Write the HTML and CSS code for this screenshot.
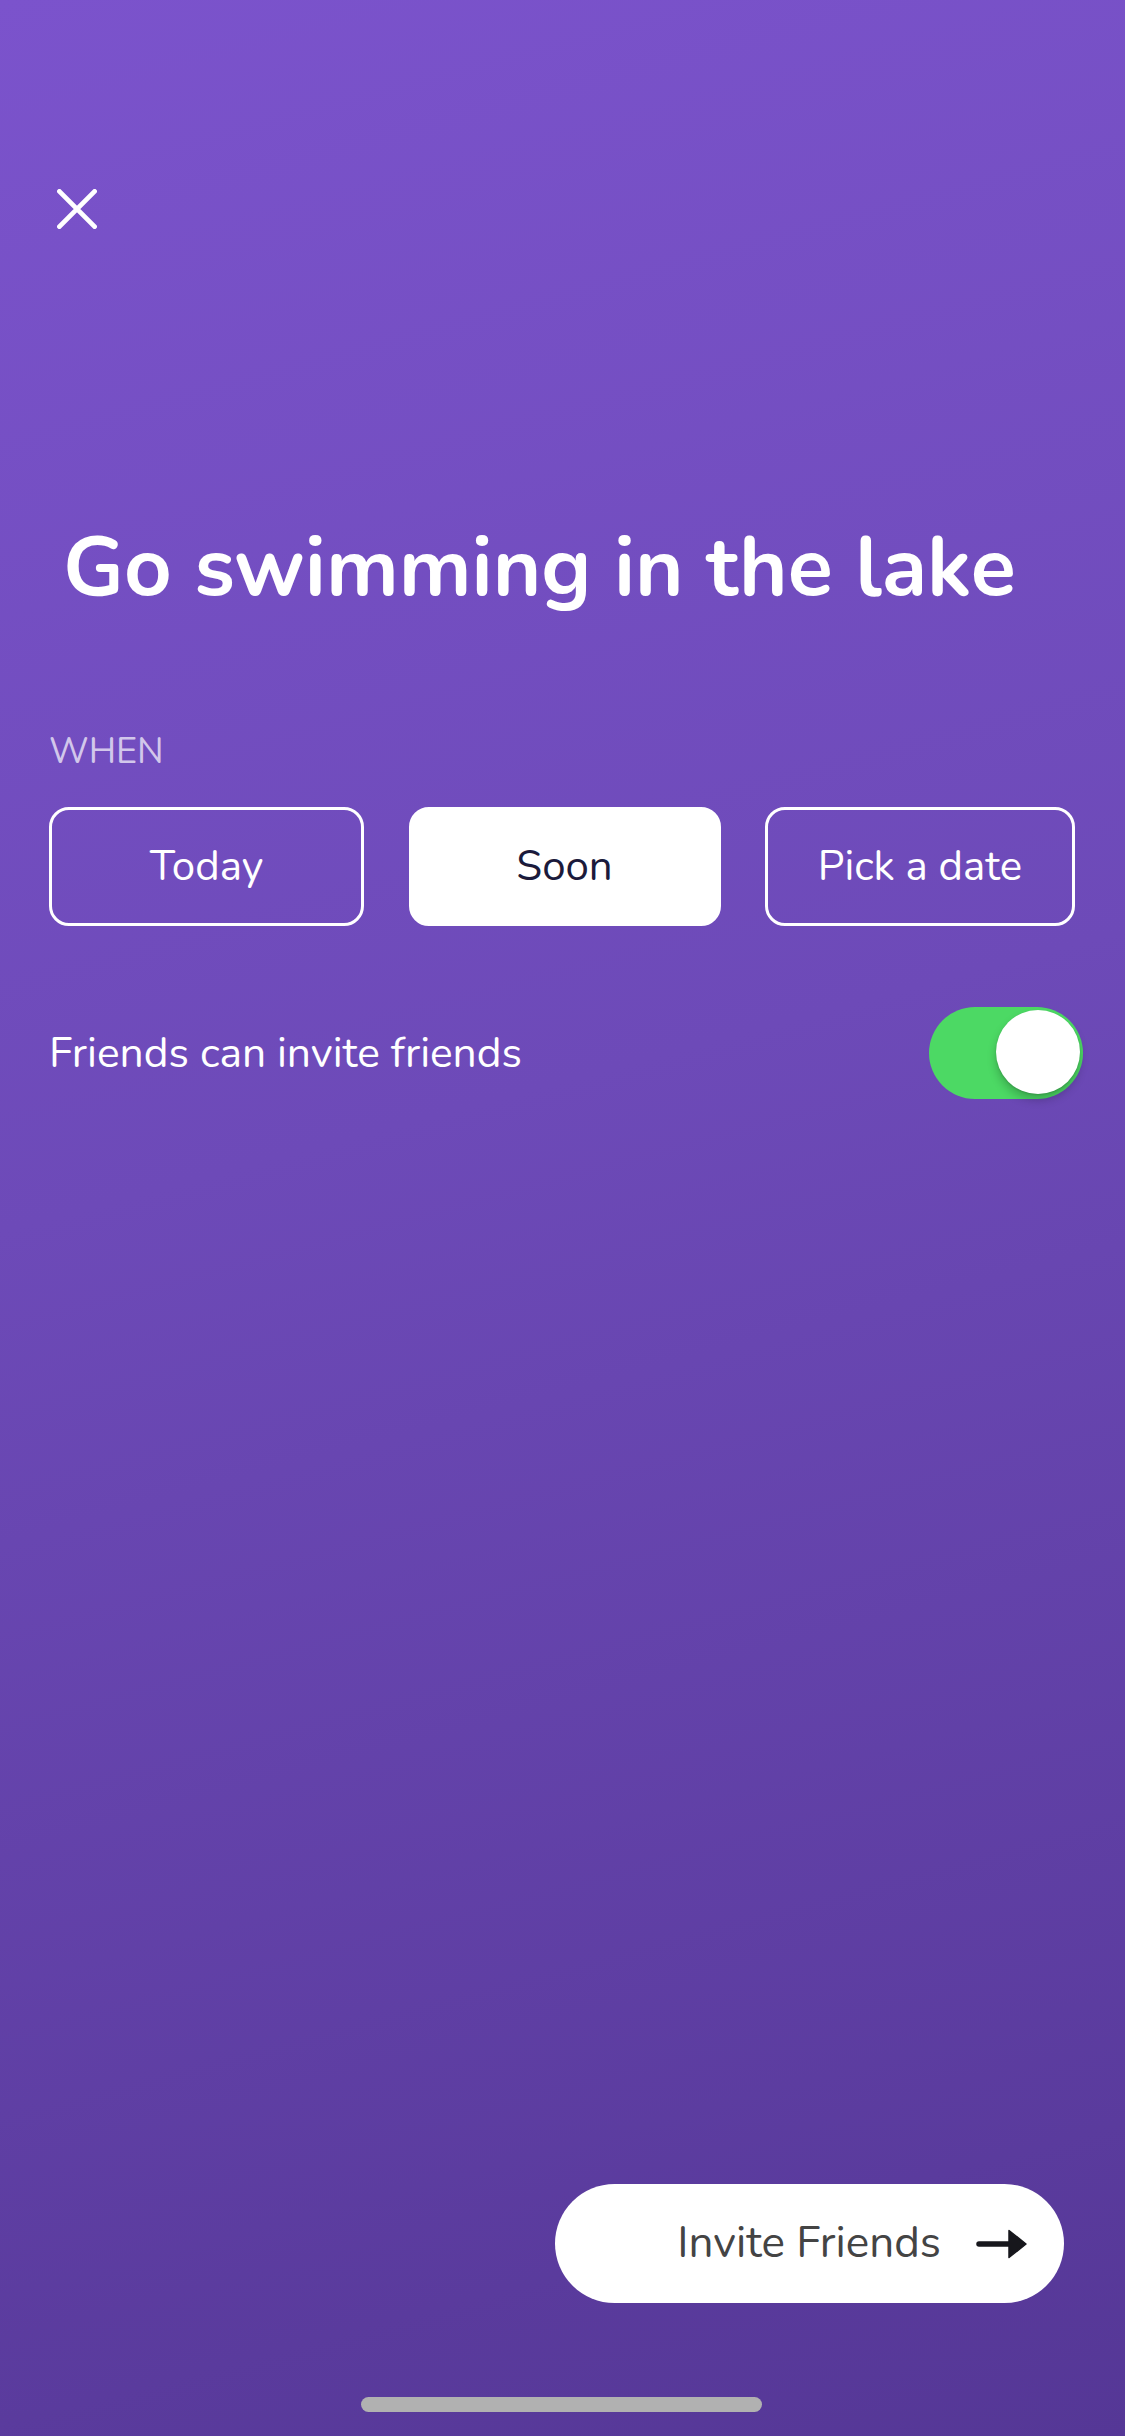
FILE: index.html
```html
<!DOCTYPE html>
<html lang="en">
<head>
<meta charset="utf-8">
<title>Create plan</title>
<link rel="stylesheet" href="styles.css">
</head>
<body>
<div class="screen">
  <button class="close" aria-label="Close">
    <svg width="40" height="40" viewBox="0 0 40 40"><path d="M2.4 2.4 L37.6 37.6 M37.6 2.4 L2.4 37.6" stroke="#fff" stroke-width="4.8" stroke-linecap="round" fill="none"/></svg>
  </button>
  <h1 class="title">Go swimming in the lake</h1>
  <div class="label">WHEN</div>
  <div class="choices">
    <div class="choice">Today</div>
    <div class="choice selected">Soon</div>
    <div class="choice">Pick a date</div>
  </div>
  <div class="setting">
    <span class="setting-text">Friends can invite friends</span>
    <div class="toggle"><div class="knob"></div></div>
  </div>
  <div class="footer">
    <button class="invite">
      <span class="invite-text">Invite Friends</span>
      <svg width="52" height="30" viewBox="0 0 52 30"><path d="M3 15 H36" stroke="#17171c" stroke-width="5.5" stroke-linecap="round"/><path d="M33 1.5 L50 15 L33 28.5 Z" fill="#17171c" stroke="#17171c" stroke-width="1.5" stroke-linejoin="round"/></svg>
    </button>
  </div>
  <div class="home-indicator"></div>
</div>
</body>
</html>
```
FILE: styles.css
```css
* { box-sizing: border-box; }
html, body { margin: 0; padding: 0; }
body {
  width: 1125px;
  height: 2436px;
  font-family: "Nunito", "Lato", "Open Sans", sans-serif;
  overflow: hidden;
}
.screen {
  width: 1125px;
  height: 2436px;
  background: linear-gradient(165deg, #7b53cc 0%, #6d4ab8 45%, #553796 100%);
  display: flex;
  flex-direction: column;
  padding: 189px 50px 0 49px;
}
.close {
  align-self: flex-start;
  background: none;
  border: 0;
  padding: 0;
  margin: 0 0 0 8px;
  width: 40px;
  height: 40px;
  display: block;
}
.close svg { display: block; }
.title {
  margin: 289px 0 0 0;
  padding-left: 14px;
  font-size: 83px;
  line-height: 1.2;
  font-weight: 700;
  color: #fff;
  white-space: nowrap;
}
.label {
  margin-top: 112px;
  font-size: 36px;
  line-height: 1.2;
  color: rgba(255, 255, 255, 0.7);
}
.choices {
  margin-top: 34px;
  display: grid;
  grid-template-columns: 315px 312px 310px;
  justify-content: space-between;
}
.choice {
  height: 119px;
  border: 3px solid #fff;
  border-radius: 20px;
  display: flex;
  align-items: center;
  justify-content: center;
  padding-top: 2px;
  font-size: 42px;
  line-height: 1.2;
  color: #fff;
}
.choice.selected {
  background: #fff;
  color: #1b1a3b;
}
.setting {
  margin-top: 81px;
  margin-right: -8px;
  display: flex;
  align-items: center;
  justify-content: space-between;
}
.setting-text {
  font-size: 42.5px;
  line-height: 1.2;
  color: #fff;
  padding-top: 2px;
}
.toggle {
  width: 154px;
  height: 92px;
  border-radius: 46px;
  background: #4cd964;
  display: flex;
  align-items: center;
  justify-content: flex-end;
  padding: 0 3px 2px;
}
.knob {
  width: 84px;
  height: 84px;
  border-radius: 50%;
  background: #fff;
  box-shadow: 0 6px 10px rgba(0, 0, 0, 0.22), 0 1px 2px rgba(0, 0, 0, 0.15);
}
.footer {
  margin-top: auto;
  display: flex;
  justify-content: flex-end;
  padding-right: 11px;
}
.invite {
  width: 509px;
  height: 119px;
  border: 0;
  border-radius: 60px;
  background: #fff;
  display: flex;
  align-items: center;
  justify-content: flex-end;
  padding: 0 36px 0 0;
  gap: 35px;
  font-family: inherit;
}
.invite-text {
  font-size: 44px;
  line-height: 1.2;
  color: #444;
}
.invite svg { display: block; }
.home-indicator {
  align-self: center;
  margin: 94px 0 24px 0;
  width: 401px;
  height: 15px;
  border-radius: 8px;
  background: #b1b1b1;
  position: relative;
  left: -0.5px;
}
```
